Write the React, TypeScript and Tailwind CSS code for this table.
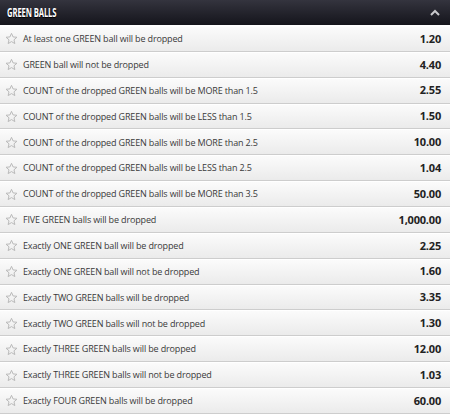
import React from "react";

const rows: [string, string][] = [
  ["At least one GREEN ball will be dropped", "1.20"],
  ["GREEN ball will not be dropped", "4.40"],
  ["COUNT of the dropped GREEN balls will be MORE than 1.5", "2.55"],
  ["COUNT of the dropped GREEN balls will be LESS than 1.5", "1.50"],
  ["COUNT of the dropped GREEN balls will be MORE than 2.5", "10.00"],
  ["COUNT of the dropped GREEN balls will be LESS than 2.5", "1.04"],
  ["COUNT of the dropped GREEN balls will be MORE than 3.5", "50.00"],
  ["FIVE GREEN balls will be dropped", "1,000.00"],
  ["Exactly ONE GREEN ball will be dropped", "2.25"],
  ["Exactly ONE GREEN ball will not be dropped", "1.60"],
  ["Exactly TWO GREEN balls will be dropped", "3.35"],
  ["Exactly TWO GREEN balls will not be dropped", "1.30"],
  ["Exactly THREE GREEN balls will be dropped", "12.00"],
  ["Exactly THREE GREEN balls will not be dropped", "1.03"],
  ["Exactly FOUR GREEN balls will be dropped", "60.00"],
];

function Star() {
  return (
    <svg width="13" height="13" viewBox="0 0 24 24" className="shrink-0">
      <path
        d="M12 2.5l2.9 6.6 7.1.6-5.4 4.7 1.6 7-6.2-3.7-6.2 3.7 1.6-7L2 9.7l7.1-.6z"
        fill="none"
        stroke="#b8b8b8"
        strokeWidth="1.8"
        strokeLinejoin="round"
      />
    </svg>
  );
}

export default function App() {
  return (
    <div
      className="w-[450px] h-[415px] overflow-hidden bg-white"
      style={{ fontFamily: '"Open Sans", "Liberation Sans", sans-serif' }}
    >
      <div className="h-[25px] flex items-center justify-between pl-[7px] pr-[10px] bg-gradient-to-b from-[#34343e] to-[#15151c]">
        <span className="inline-block origin-left scale-x-[0.64] text-white text-[12px] font-bold tracking-[-0.2px] [text-shadow:0_1px_1px_#000] whitespace-nowrap">
          GREEN BALLS
        </span>
        <svg width="10" height="7" viewBox="0 0 10 7">
          <path d="M1 6l4-4 4 4" fill="none" stroke="#c8c8cc" strokeWidth="2" />
        </svg>
      </div>
      <div className="h-[1px] bg-white" />
      <div className="flex flex-col">
        {rows.map(([label, odd], i) => (
          <div
            key={i}
            className="h-[25.86px] shrink-0 flex items-center justify-between pl-[5px] pr-[9px] border-t border-t-white border-b border-b-[#cdcdcd] bg-gradient-to-b from-[#fbfbfb] to-[#ebebeb]"
          >
            <div className="flex items-center gap-[5px]">
              <Star />
              <span className="text-[9px] text-[#3a3a3a] tracking-[-0.15px] whitespace-nowrap">{label}</span>
            </div>
            <span className="text-[11px] font-bold text-[#222] tracking-[-0.2px]">{odd}</span>
          </div>
        ))}
      </div>
    </div>
  );
}
